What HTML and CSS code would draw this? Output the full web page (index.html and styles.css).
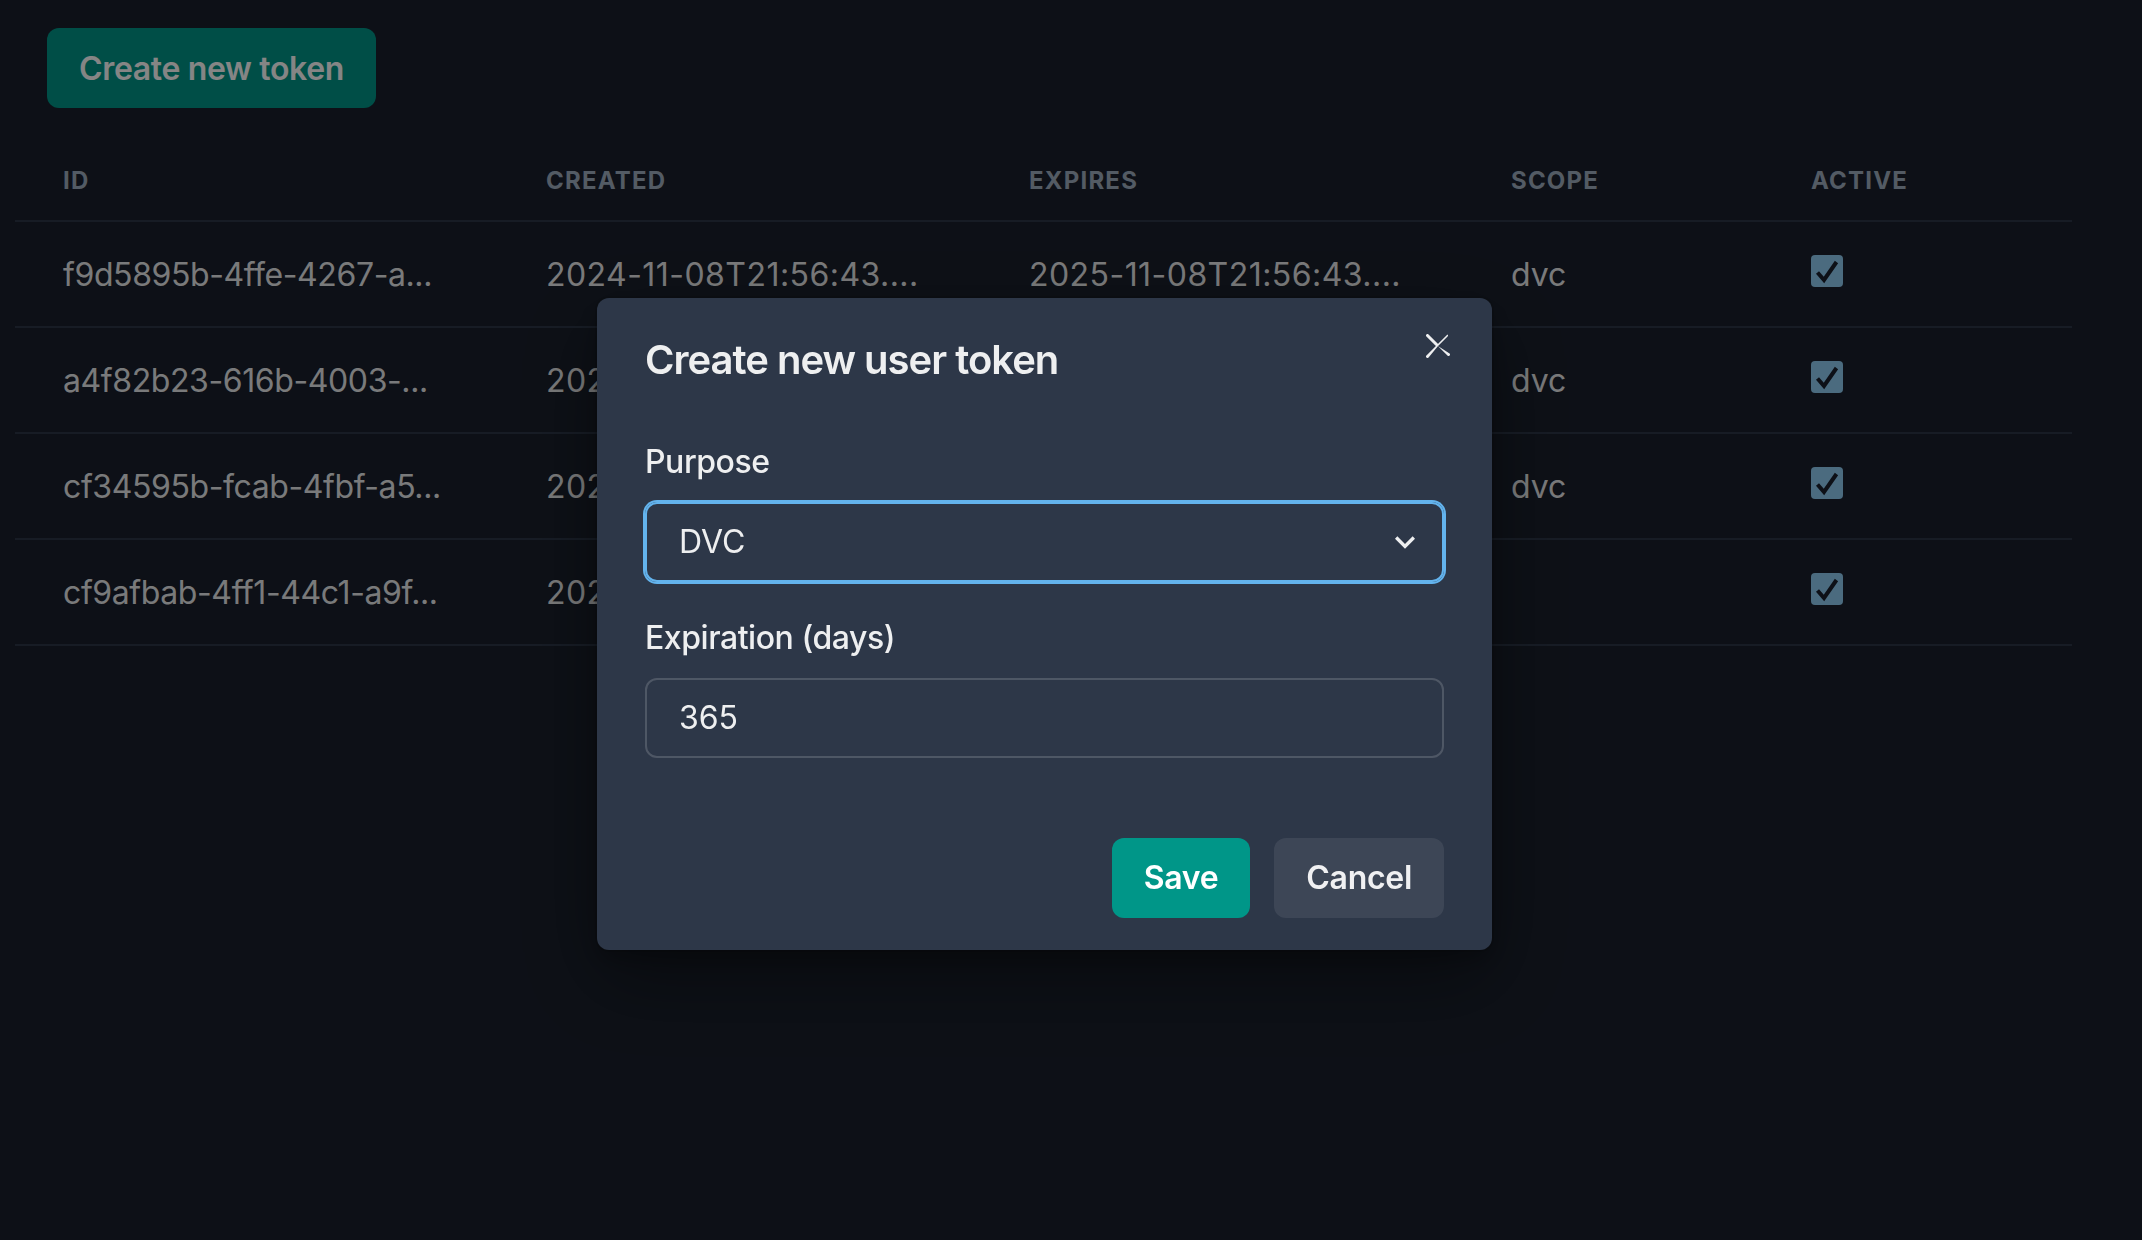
FILE: index.html
```html
<!DOCTYPE html>
<html lang="en">
<head>
<meta charset="utf-8">
<title>Tokens</title>
<link rel="stylesheet" href="styles.css">
</head>
<body>
<main class="page">
  <button class="btn-create" type="button">Create new token</button>
  <table class="tokens">
    <colgroup>
      <col class="c-id"><col class="c-created"><col class="c-expires"><col class="c-scope"><col class="c-active">
    </colgroup>
    <thead>
      <tr><th>ID</th><th>Created</th><th>Expires</th><th>Scope</th><th>Active</th></tr>
    </thead>
    <tbody>
      <tr>
        <td class="id">f9d5895b-4ffe-4267-a...</td>
        <td class="date">2024-11-08T21:56:43....</td>
        <td class="date">2025-11-08T21:56:43....</td>
        <td>dvc</td>
        <td><span class="check"><svg viewBox="0 0 32 32"><polyline points="6.5,17.5 13,25 25.5,7"/></svg></span></td>
      </tr>
      <tr>
        <td class="id">a4f82b23-616b-4003-...</td>
        <td class="date">2024-11-08T21:56:43....</td>
        <td class="date">2025-11-08T21:56:43....</td>
        <td>dvc</td>
        <td><span class="check"><svg viewBox="0 0 32 32"><polyline points="6.5,17.5 13,25 25.5,7"/></svg></span></td>
      </tr>
      <tr>
        <td class="id">cf34595b-fcab-4fbf-a5...</td>
        <td class="date">2024-11-08T21:56:43....</td>
        <td class="date">2025-11-08T21:56:43....</td>
        <td>dvc</td>
        <td><span class="check"><svg viewBox="0 0 32 32"><polyline points="6.5,17.5 13,25 25.5,7"/></svg></span></td>
      </tr>
      <tr>
        <td class="id">cf9afbab-4ff1-44c1-a9f...</td>
        <td class="date">2024-11-08T21:56:43....</td>
        <td class="date">2025-11-08T21:56:43....</td>
        <td></td>
        <td><span class="check"><svg viewBox="0 0 32 32"><polyline points="6.5,17.5 13,25 25.5,7"/></svg></span></td>
      </tr>
    </tbody>
  </table>
</main>

<div class="overlay"></div>

<div class="modal-layer">
  <section class="modal" role="dialog" aria-label="Create new user token">
    <header class="modal-header">Create new user token</header>
    <button class="modal-close" type="button" aria-label="Close">
      <svg viewBox="0 0 24 24"><path d="M.439,21.44a1.5,1.5,0,0,0,2.122,2.121L11.823,12.3a.25.25,0,0,1,.354,0l9.262,9.263a1.5,1.5,0,1,0,2.122-2.121L12.3,12.177a.25.25,0,0,1,0-.354l9.263-9.262A1.5,1.5,0,0,0,21.439.44L12.177,9.7a.25.25,0,0,1-.354,0L2.561.44A1.5,1.5,0,0,0,.439,2.561L9.7,11.823a.25.25,0,0,1,0,.354Z"/></svg>
    </button>
    <div class="modal-body">
      <div class="field">
        <label class="field-label">Purpose</label>
        <div class="select">
          <span class="select-value">DVC</span>
          <svg class="select-icon" viewBox="0 0 24 24"><path d="M16.59 8.59L12 13.17 7.41 8.59 6 10l6 6 6-6z"/></svg>
        </div>
      </div>
      <div class="field">
        <label class="field-label">Expiration (days)</label>
        <div class="input">365</div>
      </div>
    </div>
    <footer class="modal-footer">
      <button class="btn btn-save" type="button">Save</button>
      <button class="btn btn-cancel" type="button">Cancel</button>
    </footer>
  </section>
</div>
</body>
</html>
```

FILE: styles.css
```css
* { box-sizing: border-box; }

html, body {
  margin: 0;
  width: 2142px;
  height: 1240px;
  overflow: hidden;
}

body {
  background: #1A202C;
  color: rgba(255, 255, 255, 0.92);
  font-family: Inter, "Noto Sans", "Liberation Sans", sans-serif;
}

.page {
  padding: 28px 0 0 15px;
}

.btn-create {
  display: block;
  margin-left: 32px;
  height: 80px;
  padding: 0 32px;
  border: 0;
  border-radius: 12px;
  background: #009688;
  color: #fff;
  font-family: inherit;
  font-size: 32px;
  font-weight: 600;
  letter-spacing: -0.35px;
}

.tokens {
  margin-top: 32px;
  width: 2057px;
  table-layout: fixed;
  border-collapse: collapse;
}

.c-id { width: 483px; }
.c-created { width: 483px; }
.c-expires { width: 482px; }
.c-scope { width: 300px; }
.c-active { width: 309px; }

.tokens th {
  padding: 25px 48px 23px;
  text-align: left;
  font-size: 24px;
  line-height: 32px;
  font-weight: 700;
  letter-spacing: 0.05em;
  text-transform: uppercase;
  color: #A0AEC0;
  border-bottom: 2px solid #2D3748;
}

.tokens td {
  padding: 33px 48px 31px;
  font-size: 32px;
  line-height: 40px;
  white-space: nowrap;
  overflow: hidden;
  vertical-align: top;
  border-bottom: 2px solid #2D3748;
}

.tokens td.id {
  letter-spacing: -0.4px;
}

.tokens td.date {
  letter-spacing: 0.45px;
}

.check {
  display: block;
  width: 32px;
  height: 32px;
  border-radius: 4px;
  background: #90CDF4;
}

.check svg {
  display: block;
  width: 32px;
  height: 32px;
  fill: none;
  stroke: #1A202C;
  stroke-width: 4;
}

.overlay {
  position: fixed;
  inset: 0;
  background: rgba(0, 0, 0, 0.48);
}

.modal-layer {
  position: fixed;
  inset: 0;
  display: flex;
  align-items: center;
  justify-content: center;
  padding: 7px 53px 0 0;
}

.modal {
  position: relative;
  width: 895px;
  background: #2D3748;
  border-radius: 12px;
  box-shadow: rgba(0, 0, 0, 0.1) 0 0 0 2px, rgba(0, 0, 0, 0.2) 0 10px 20px, rgba(0, 0, 0, 0.4) 0 30px 80px;
}

.modal-header {
  padding: 32px 48px;
  font-size: 40px;
  line-height: 60px;
  font-weight: 600;
  letter-spacing: -1px;
}

.modal-close {
  position: absolute;
  top: 16px;
  right: 22px;
  width: 64px;
  height: 64px;
  border: 0;
  padding: 0;
  background: transparent;
  display: flex;
  align-items: center;
  justify-content: center;
}

.modal-close svg {
  width: 24px;
  height: 24px;
  fill: rgba(255, 255, 255, 0.92);
}

.modal-body {
  padding: 16px 48px 48px;
}

.field + .field {
  margin-top: 32px;
}

.field-label {
  display: block;
  margin-bottom: 16px;
  font-size: 32px;
  line-height: 48px;
  font-weight: 500;
  letter-spacing: -0.45px;
}

.select,
.input {
  display: flex;
  align-items: center;
  height: 80px;
  padding: 0 32px;
  border-radius: 12px;
  font-size: 32px;
}

.select {
  justify-content: space-between;
  padding-right: 13px;
  border: 2px solid #63B3ED;
  box-shadow: 0 0 0 2px #63B3ED;
}

.select-icon {
  width: 48px;
  height: 40px;
  fill: rgba(255, 255, 255, 0.92);
}

.input {
  border: 2px solid rgba(255, 255, 255, 0.16);
}

.modal-footer {
  display: flex;
  justify-content: flex-end;
  gap: 24px;
  padding: 32px 48px;
}

.btn {
  height: 80px;
  padding: 0 32px;
  border: 0;
  border-radius: 12px;
  font-family: inherit;
  font-size: 32px;
  font-weight: 600;
  letter-spacing: -0.3px;
  color: rgba(255, 255, 255, 0.92);
}

.btn-save {
  background: #009688;
  color: #fff;
}

.btn-cancel {
  background: rgba(255, 255, 255, 0.08);
}
```
